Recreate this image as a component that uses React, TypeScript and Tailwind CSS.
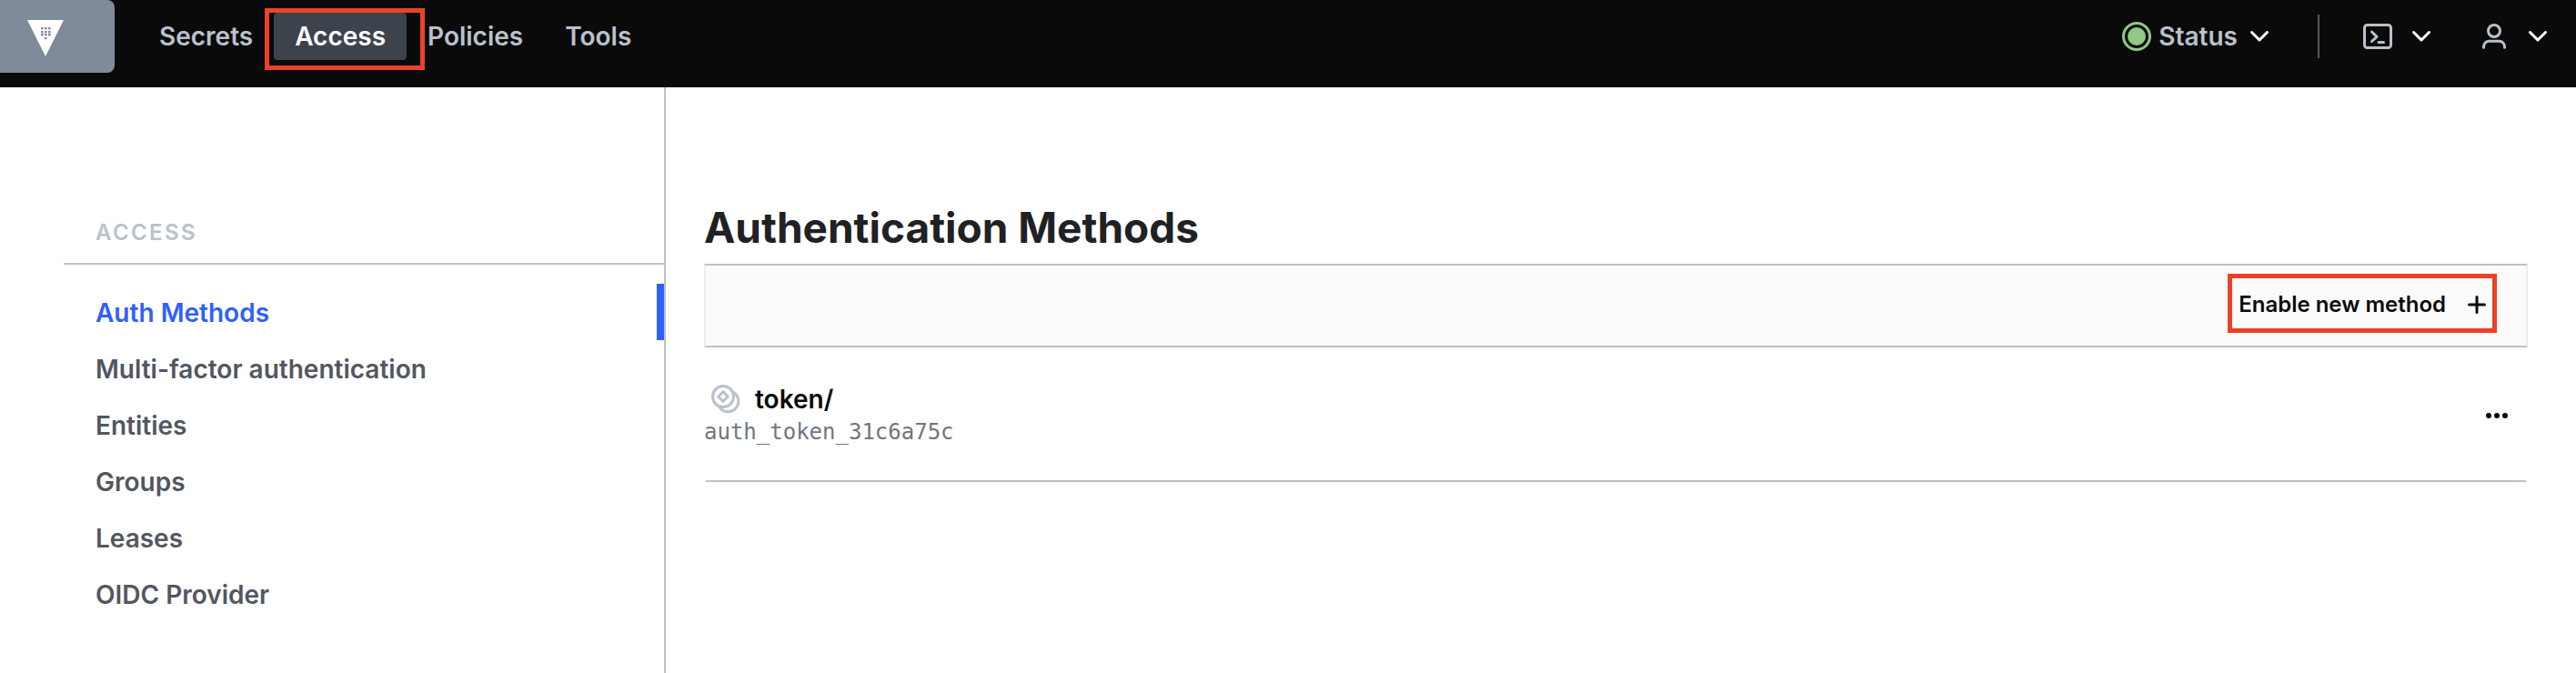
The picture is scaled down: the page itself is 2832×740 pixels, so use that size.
import React from "react";

const navLinks = [
  { label: "Secrets", active: false },
  { label: "Access", active: true },
  { label: "Policies", active: false },
  { label: "Tools", active: false },
];

const sideLinks = [
  { label: "Auth Methods", active: true },
  { label: "Multi-factor authentication", active: false },
  { label: "Entities", active: false },
  { label: "Groups", active: false },
  { label: "Leases", active: false },
  { label: "OIDC Provider", active: false },
];

function VaultLogo() {
  const rows = [30, 34, 37];
  const cols = [45, 49, 53];
  return (
    <svg viewBox="30 22 40 40" className="h-10 w-10" aria-hidden="true">
      <path d="M30 22h40L50 62z" fill="#fff" />
      {rows.map((y, r) =>
        cols.map((x, c) => (
          <rect key={`${r}${c}`} x={x} y={y} width="2.6" height="2.4" fill="#7f8a9b" />
        ))
      )}
      <rect x="49" y="41" width="2.6" height="2.2" fill="#7f8a9b" />
    </svg>
  );
}

function Chevron() {
  return (
    <svg viewBox="0 0 32 32" className="h-8 w-8 text-white" fill="none" stroke="currentColor" strokeWidth="3" strokeLinecap="round" strokeLinejoin="round" aria-hidden="true">
      <path d="M7.500 11.500l8.500 8.500 8.500-8.500" />
    </svg>
  );
}

function StatusIcon() {
  return (
    <svg viewBox="0 0 32 32" className="h-8 w-8" aria-hidden="true">
      <circle cx="16" cy="16" r="14.5" fill="none" stroke="#8fca85" strokeWidth="3" />
      <circle cx="16" cy="16" r="10" fill="#8fca85" />
    </svg>
  );
}

function TerminalIcon() {
  return (
    <svg viewBox="0 0 32 32" className="h-8 w-8" fill="none" stroke="currentColor" strokeWidth="3" strokeLinecap="round" strokeLinejoin="round" aria-hidden="true">
      <rect x="1.5" y="3.5" width="29" height="25" rx="3" />
      <path d="M9.500 11l5.500 5.300-5.500 5.200M17 22.500h5.500" />
    </svg>
  );
}

function UserIcon() {
  return (
    <svg viewBox="0 0 32 32" className="h-8 w-8" fill="none" stroke="currentColor" strokeWidth="3" strokeLinecap="round" aria-hidden="true">
      <circle cx="16" cy="10" r="6.500" />
      <path d="M4.500 28.300v-1a6 6 0 0 1 6-6h11a6 6 0 0 1 6 6v1" />
    </svg>
  );
}

function TokenIcon() {
  return (
    <svg viewBox="0 0 32 32" className="h-8 w-8 text-[#bac1cc]" fill="none" stroke="currentColor" strokeWidth="3" strokeLinecap="round" strokeLinejoin="round" aria-hidden="true">
      <circle cx="13" cy="13" r="11.500" />
      <path d="M13 7.700l5.300 5.300-5.300 5.300L7.700 13z" />
      <path d="M24.500 8.500A11.500 11.500 0 1 1 8.700 24.500" />
    </svg>
  );
}

function Highlight({ className }: { className: string }) {
  return <span aria-hidden="true" className={`pointer-events-none absolute border-[5px] border-[#ec4126] ${className}`} />;
}

function Header() {
  return (
    <header className="flex h-24 items-start justify-between bg-[#0a0a0a] text-[28px] leading-10 font-semibold text-[#bac1cc]">
      <div className="flex h-20 items-center">
        <a href="#home" aria-label="Vault home" className="flex h-20 w-[126px] items-center rounded-r-lg bg-[#7f8a9b] pt-1 pl-[30px]">
          <VaultLogo />
        </a>
        <nav aria-label="Main" className="ml-[26px]">
          <ul className="flex items-center">
            {navLinks.map((link) => (
              <li key={link.label} className="relative">
                <a
                  href={`#${link.label.toLowerCase()}`}
                  aria-current={link.active ? "page" : undefined}
                  className={
                    link.active
                      ? "block rounded bg-[#3d434d] px-[23px] py-1.5 text-white"
                      : "block px-[23px] py-1.5"
                  }
                >
                  {link.label}
                </a>
                {link.active && <Highlight className="-top-[5px] -right-5 -bottom-[11px] -left-2.5" />}
              </li>
            ))}
          </ul>
        </nav>
      </div>
      <div className="flex h-20 items-center pr-[26px]">
        <button type="button" className="flex items-center">
          <StatusIcon />
          <span className="ml-2 mr-2">Status</span>
          <Chevron />
        </button>
        <span className="ml-12 h-12 w-0.5 bg-[#525761]" />
        <button type="button" aria-label="Console" className="ml-12 flex items-center gap-4">
          <TerminalIcon />
          <Chevron />
        </button>
        <button type="button" aria-label="User menu" className="ml-12 flex items-center gap-4">
          <UserIcon />
          <Chevron />
        </button>
      </div>
    </header>
  );
}

function Sidebar() {
  return (
    <aside className="w-[732px] shrink-0 border-r-2 border-[#bac1cc] pt-[140px] pl-[70px]">
      <h2 className="border-b-2 border-[#bac1cc] pb-[13px] pl-[35px] text-2xl leading-10 font-semibold tracking-widest text-[#bac1cc]">
        ACCESS
      </h2>
      <ul className="mt-[21px]">
        {sideLinks.map((link) => (
          <li key={link.label}>
            <a
              href={`#${link.label.toLowerCase().replace(/ /g, "-")}`}
              aria-current={link.active ? "page" : undefined}
              className={
                link.active
                  ? "block border-r-8 border-[#2e60fb] pt-3 pb-2.5 pl-[35px] text-[28px] leading-10 font-semibold text-[#2e60fb]"
                  : "block border-r-8 border-transparent pt-3 pb-2.5 pl-[35px] text-[28px] leading-10 font-semibold text-[#525761]"
              }
            >
              {link.label}
            </a>
          </li>
        ))}
      </ul>
    </aside>
  );
}

export default function App() {
  return (
    <div className="flex min-h-screen flex-col bg-white font-['Inter',sans-serif]">
      <Header />
      <div className="flex flex-1">
        <Sidebar />
        <main className="min-w-0 flex-1 pt-[124px] pr-[53px] pl-[42px]">
          <h1 className="text-[46px] leading-[60px] font-bold text-[#1f2124]">Authentication Methods</h1>
          <div className="mt-2.5 flex h-[92px] items-center justify-end border-2 border-x-[#ebeef2] border-y-[#bac1cc] bg-[#fbfbfb] pr-[38px] pb-0.5">
            <a href="#enable" className="relative flex items-center gap-[18px] text-2xl leading-8 font-semibold text-[#0a0a0a]">
              Enable new method
              <svg viewBox="0 0 32 32" className="h-8 w-8" fill="none" stroke="currentColor" strokeWidth="3" strokeLinecap="round" aria-hidden="true">
                <path d="M16 7.500v17M7.500 16h17" />
              </svg>
              <Highlight className="-top-[18px] -right-1.5 -bottom-[15px] -left-3" />
            </a>
          </div>
          <div className="mr-0.5 ml-0.5 flex h-[148px] items-center justify-between border-b-2 border-[#bac1cc] pt-1 pr-4">
            <div className="-ml-0.5">
              <a href="#token" className="flex items-center gap-4 pl-2 text-[28px] leading-9 font-semibold text-[#0a0a0a]">
                <TokenIcon />
                token/
              </a>
              <code className="block font-['DejaVu_Sans_Mono',monospace] text-2xl leading-9 text-[#6f7682]">auth_token_31c6a75c</code>
            </div>
            <button type="button" aria-label="Token options" className="flex h-8 w-8 items-center justify-center">
              <svg viewBox="0 0 24 6" className="h-1.5 w-6" fill="#0a0a0a" aria-hidden="true">
                <circle cx="3" cy="3" r="3" />
                <circle cx="12" cy="3" r="3" />
                <circle cx="21" cy="3" r="3" />
              </svg>
            </button>
          </div>
        </main>
      </div>
    </div>
  );
}
